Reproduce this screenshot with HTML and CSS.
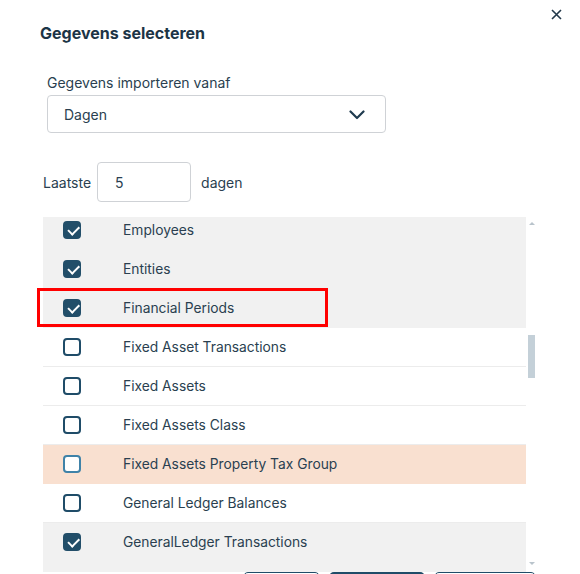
FILE: index.html
```html
<!DOCTYPE html>
<html lang="nl">
<head>
<meta charset="utf-8">
<title>Gegevens selecteren</title>
<link rel="stylesheet" href="styles.css">
</head>
<body>
<div class="dialog">
  <button class="close" aria-label="Sluiten">
    <svg width="11" height="11" viewBox="0 0 11 11"><path d="M1 1 L10 10 M10 1 L1 10" stroke="#22384a" stroke-width="1.6" fill="none"/></svg>
  </button>

  <h1 class="title">Gegevens selecteren</h1>

  <div class="field">
    <label class="field-label">Gegevens importeren vanaf</label>
    <div class="select">
      <span>Dagen</span>
      <svg class="chevron" width="16" height="10" viewBox="0 0 16 10"><path d="M1.5 1.5 L8 8 L14.5 1.5" stroke="#1f3b4f" stroke-width="2.2" fill="none" stroke-linecap="round" stroke-linejoin="round"/></svg>
    </div>
  </div>

  <div class="days-row">
    <span>Laatste</span>
    <div class="days-input">5</div>
    <span>dagen</span>
  </div>

  <div class="list-wrap">
    <div class="list">
      <div class="rows">
        <div class="row checked"><span class="cb"></span><span class="name">Employees</span></div>
        <div class="row checked"><span class="cb"></span><span class="name">Entities</span></div>
        <div class="row checked"><span class="cb"></span><span class="name">Financial Periods</span></div>
        <div class="row"><span class="cb"></span><span class="name">Fixed Asset Transactions</span></div>
        <div class="row"><span class="cb"></span><span class="name">Fixed Assets</span></div>
        <div class="row"><span class="cb"></span><span class="name">Fixed Assets Class</span></div>
        <div class="row hover"><span class="cb"></span><span class="name">Fixed Assets Property Tax Group</span></div>
        <div class="row"><span class="cb"></span><span class="name">General Ledger Balances</span></div>
        <div class="row checked"><span class="cb"></span><span class="name">GeneralLedger Transactions</span></div>
      </div>
    </div>
    <div class="scrollbar">
      <span class="arrow up"></span>
      <span class="thumb"></span>
      <span class="arrow down"></span>
    </div>
  </div>

  <div class="actions">
    <button class="btn outline" aria-label="Terug"></button>
    <button class="btn primary" aria-label="Importeren"></button>
    <button class="btn outline wide" aria-label="Annuleren"></button>
  </div>

  <div class="highlight"></div>
</div>
</body>
</html>
```

FILE: styles.css
```css
* { box-sizing: border-box; }

html, body {
  margin: 0;
  padding: 0;
  background: #ffffff;
}

body {
  font-family: Inter, "Noto Sans", "Liberation Sans", sans-serif;
  color: #2a3f50;
}

.dialog {
  position: relative;
  width: 580px;
  height: 574px;
  overflow: hidden;
  background: #fff;
}

.close {
  position: absolute;
  top: 8px;
  right: 18px;
  width: 12px;
  height: 12px;
  padding: 0;
  border: 0;
  background: none;
  display: flex;
  align-items: center;
  justify-content: center;
}

.title {
  margin: 0;
  padding: 23px 0 0 40px;
  font-size: 16px;
  line-height: 20px;
  font-weight: 700;
  color: #1c3446;
}

.field {
  margin: 31px 0 0 47px;
  width: 339px;
}

.field-label {
  display: block;
  font-size: 14px;
  line-height: 18px;
  color: #2a3f50;
  margin-bottom: 3px;
}

.select {
  height: 38px;
  border: 1px solid #cfd2d6;
  border-radius: 4px;
  display: flex;
  align-items: center;
  justify-content: space-between;
  padding: 0 20px 0 16px;
  font-size: 14px;
  color: #2a3f50;
}

.chevron { margin-top: 1px; }

.days-row {
  margin: 29px 0 0 43px;
  display: flex;
  align-items: center;
  font-size: 14px;
  color: #2a3f50;
}

.days-input {
  width: 94px;
  height: 40px;
  margin: 0 10px 0 6px;
  border: 1px solid #cfd2d6;
  border-radius: 4px;
  display: flex;
  align-items: center;
  padding-left: 17px;
}

.list-wrap {
  margin: 15px 0 0 43px;
  display: flex;
  height: 355px;
}

/* the grey fill below the last row belongs to the list body */
.list {
  width: 483px;
  height: 355px;
  overflow: hidden;
  background: #f1f1f1;
}

.rows { margin-top: -6px; }

.row {
  height: 39px;
  display: flex;
  align-items: center;
  border-bottom: 1px solid #ececec;
  background: #fff;
  font-size: 13.8px;
  color: #2a3f50;
}

.name { margin-top: -1px; }

.row.checked {
  background: #f1f1f1;
  border-bottom-color: #f1f1f1;
}

.row.hover {
  background: #f9e0d0;
  border-bottom-color: #f9e0d0;
}

.cb {
  width: 18px;
  height: 18px;
  margin: 0 42px 0 20px;
  border: 2px solid #1f4c68;
  border-radius: 4px;
  background: #fff;
  position: relative;
  flex: none;
}

.row.hover .cb { border-color: #3f82a8; }

.row.checked .cb {
  background: #224e69;
  border-color: #224e69;
}

.row.checked .cb::after {
  content: "";
  position: absolute;
  left: 2.5px;
  top: 2.5px;
  width: 9px;
  height: 4.5px;
  border-left: 2px solid #fff;
  border-bottom: 2px solid #fff;
  transform: rotate(-45deg);
}

.scrollbar {
  width: 11px;
  height: 355px;
  display: flex;
  flex-direction: column;
  align-items: center;
  padding-top: 5px;
}

.arrow {
  width: 0;
  height: 0;
  border-left: 3px solid transparent;
  border-right: 3px solid transparent;
}

.arrow.up { border-bottom: 3px solid #b9c4cc; }

.arrow.down {
  border-top: 3px solid #b9c4cc;
  margin-top: auto;
  margin-bottom: 7px;
}

.thumb {
  width: 7px;
  height: 43px;
  margin-top: 110px;
  background: #c4d0d8;
}

.actions {
  display: flex;
  margin: 0 0 0 243px;
  gap: 9px;
}

.btn {
  height: 36px;
  border-radius: 5px;
  border: 1.5px solid #1f4c68;
  background: #fff;
  width: 77px;
  padding: 0;
}

.btn.primary {
  width: 96px;
  background: #1f4c68;
  border-width: 2px;
}

.btn.wide { width: 102px; }

.highlight {
  position: absolute;
  left: 37px;
  top: 288px;
  width: 291px;
  height: 39px;
  border: 3px solid #ff0000;
  pointer-events: none;
}
```
